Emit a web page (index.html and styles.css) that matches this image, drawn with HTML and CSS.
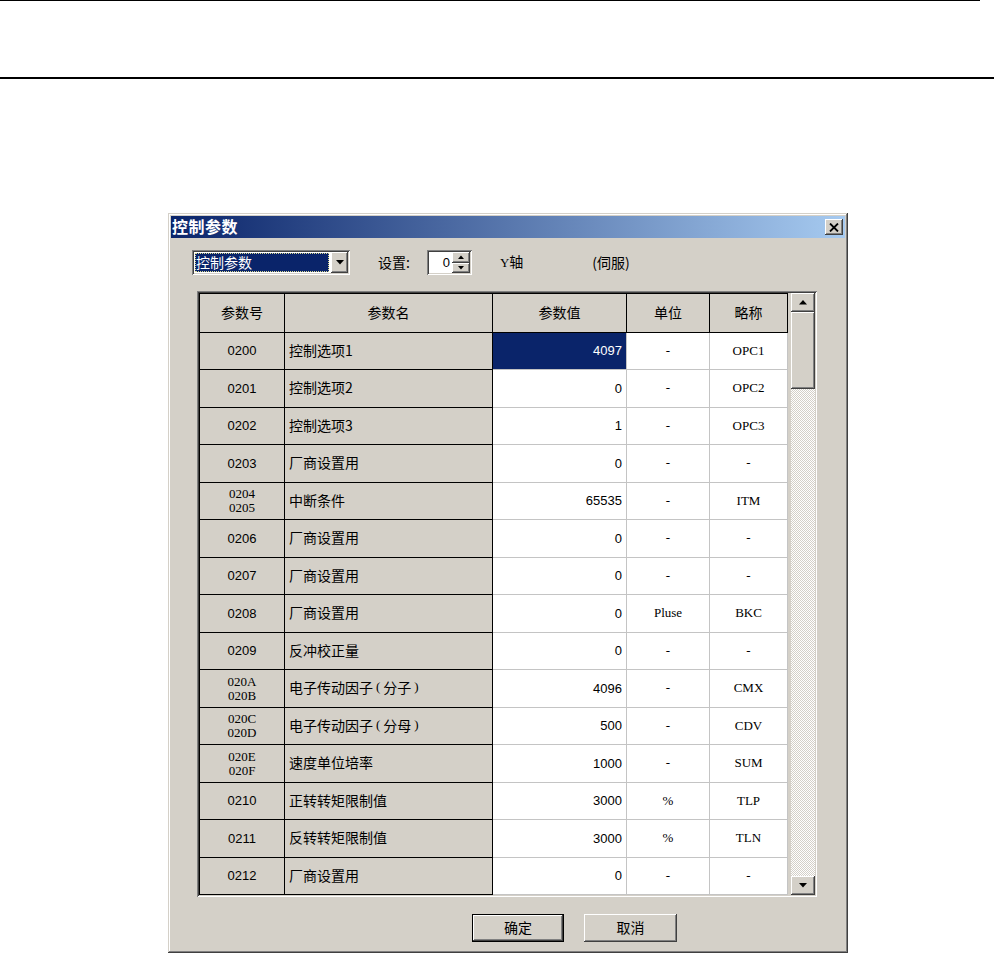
FILE: index.html
```html
<!DOCTYPE html>
<html lang="zh-CN">
<head>
<meta charset="utf-8">
<title>控制参数</title>
<link rel="stylesheet" href="styles.css">
</head>
<body>
<div class="rule-top"></div>
<div class="rule-bottom"></div>

<div class="dialog">
  <div class="titlebar">
    <span class="title">控制参数</span>
    <span class="close-btn raised">
      <svg width="10" height="9" viewBox="0 0 10 9"><path d="M1 0.5 L9 8.5 M9 0.5 L1 8.5" stroke="#000" stroke-width="1.8" fill="none"/></svg>
    </span>
  </div>

  <div class="toolbar">
    <div class="combo sunken">
      <div class="combo-value"><span>控制参数</span></div>
      <div class="combo-btn raised">
        <svg width="8" height="5" viewBox="0 0 8 5"><polygon points="0,0 8,0 4,4.5" fill="#000"/></svg>
      </div>
    </div>
    <span class="label set-label">设置:</span>
    <div class="spin sunken">
      <span class="spin-value">0</span>
      <div class="spin-btns">
        <div class="spin-btn raised"><svg width="6" height="4" viewBox="0 0 6 4"><polygon points="0,4 6,4 3,0.5" fill="#000"/></svg></div>
        <div class="spin-btn raised"><svg width="6" height="4" viewBox="0 0 6 4"><polygon points="0,0 6,0 3,3.5" fill="#000"/></svg></div>
      </div>
    </div>
    <span class="label axis"><span class="serif">Y</span>轴</span>
    <span class="label servo">(伺服)</span>
  </div>

  <div class="grid-frame">
    <div class="grid">
      <div class="c hd">参数号</div><div class="c hd">参数名</div><div class="c hd">参数值</div><div class="c hd">单位</div><div class="c hd hd-last">略称</div>

      <div class="c id">0200</div><div class="c name">控制选项1</div><div class="c val sel">4097</div><div class="c unit">-</div><div class="c abbr">OPC1</div>
      <div class="c id">0201</div><div class="c name">控制选项2</div><div class="c val">0</div><div class="c unit">-</div><div class="c abbr">OPC2</div>
      <div class="c id">0202</div><div class="c name">控制选项3</div><div class="c val">1</div><div class="c unit">-</div><div class="c abbr">OPC3</div>
      <div class="c id">0203</div><div class="c name">厂商设置用</div><div class="c val">0</div><div class="c unit">-</div><div class="c abbr">-</div>
      <div class="c id two"><span>0204</span><span>0205</span></div><div class="c name">中断条件</div><div class="c val">65535</div><div class="c unit">-</div><div class="c abbr">ITM</div>
      <div class="c id">0206</div><div class="c name">厂商设置用</div><div class="c val">0</div><div class="c unit">-</div><div class="c abbr">-</div>
      <div class="c id">0207</div><div class="c name">厂商设置用</div><div class="c val">0</div><div class="c unit">-</div><div class="c abbr">-</div>
      <div class="c id">0208</div><div class="c name">厂商设置用</div><div class="c val">0</div><div class="c unit">Pluse</div><div class="c abbr">BKC</div>
      <div class="c id">0209</div><div class="c name">反冲校正量</div><div class="c val">0</div><div class="c unit">-</div><div class="c abbr">-</div>
      <div class="c id two"><span>020A</span><span>020B</span></div><div class="c name">电子传动因子<span class="paren">(</span>分子<span class="paren">)</span></div><div class="c val">4096</div><div class="c unit">-</div><div class="c abbr">CMX</div>
      <div class="c id two"><span>020C</span><span>020D</span></div><div class="c name">电子传动因子<span class="paren">(</span>分母<span class="paren">)</span></div><div class="c val">500</div><div class="c unit">-</div><div class="c abbr">CDV</div>
      <div class="c id two"><span>020E</span><span>020F</span></div><div class="c name">速度单位培率</div><div class="c val">1000</div><div class="c unit">-</div><div class="c abbr">SUM</div>
      <div class="c id">0210</div><div class="c name">正转转矩限制值</div><div class="c val">3000</div><div class="c unit">%</div><div class="c abbr">TLP</div>
      <div class="c id">0211</div><div class="c name">反转转矩限制值</div><div class="c val">3000</div><div class="c unit">%</div><div class="c abbr">TLN</div>
      <div class="c id">0212</div><div class="c name">厂商设置用</div><div class="c val">0</div><div class="c unit">-</div><div class="c abbr">-</div>
    </div>
    <div class="vscroll">
      <div class="sb-btn raised"><svg width="8" height="5" viewBox="0 0 8 5"><polygon points="0,4.5 8,4.5 4,0" fill="#000"/></svg></div>
      <div class="sb-thumb raised"></div>
      <div class="sb-track"></div>
      <div class="sb-btn raised"><svg width="8" height="5" viewBox="0 0 8 5"><polygon points="0,0 8,0 4,4.5" fill="#000"/></svg></div>
    </div>
  </div>

  <div class="buttons">
    <div class="btn btn-default"><div class="btn-face raised">确定</div></div>
    <div class="btn"><div class="btn-face raised">取消</div></div>
  </div>
</div>
</body>
</html>
```

FILE: styles.css
```css
* { box-sizing: border-box; }

html, body {
  margin: 0;
  padding: 0;
  background: #ffffff;
}

body {
  width: 994px;
  height: 955px;
  overflow: hidden;
  font-family: "Noto Sans CJK SC", "Liberation Sans", sans-serif;
  font-size: 14px;
  color: #000;
}

.rule-top {
  width: 980px;
  height: 1px;
  background: #000;
}

.rule-bottom {
  margin-top: 76px;
  width: 994px;
  height: 2px;
  background: #000;
}

.raised {
  background: #d4d0c8;
  box-shadow: inset -1px -1px #404040, inset 1px 1px #ffffff,
              inset -2px -2px #808080, inset 2px 2px #d4d0c8;
}

.sunken {
  box-shadow: inset 1px 1px #808080, inset -1px -1px #ffffff,
              inset 2px 2px #404040, inset -2px -2px #d4d0c8;
}

.dialog {
  margin-top: 134px;
  margin-left: 168px;
  width: 680px;
  height: 740px;
  padding: 3px;
  background: #d4d0c8;
  box-shadow: inset -1px -1px #404040, inset 1px 1px #d4d0c8,
              inset -2px -2px #808080, inset 2px 2px #ffffff;
  display: flex;
  flex-direction: column;
}

.titlebar {
  height: 22px;
  background: linear-gradient(to right, #0a246a, #a6caf0);
  display: flex;
  align-items: center;
  justify-content: space-between;
  padding: 0 2px 0 1px;
}

.title {
  color: #fff;
  font-weight: bold;
  font-size: 16px;
  line-height: 18px;
  padding-bottom: 3px;
  letter-spacing: 0.5px;
}

.close-btn {
  width: 18px;
  height: 16px;
  display: flex;
  align-items: center;
  justify-content: center;
}

.toolbar {
  margin-top: 12px;
  height: 25px;
  padding-left: 21px;
  display: flex;
  align-items: center;
}

.combo {
  width: 158px;
  height: 25px;
  background: #fff;
  padding: 2px;
  display: flex;
}

.combo-value {
  flex: 1;
  margin: 1px 2px 1px 1px;
  background: #0a246a;
  color: #fff;
  outline: 1px dotted #d8d890;
  outline-offset: -1px;
  display: flex;
  align-items: center;
  padding-left: 1px;
  padding-bottom: 2px;
  font-size: 14px;
  line-height: 16px;
}

.combo-btn {
  width: 17px;
  display: flex;
  align-items: center;
  justify-content: center;
}

.label {
  font-size: 14px;
  line-height: 16px;
  padding-bottom: 2px;
}

.set-label { margin-left: 28px; }

.serif {
  font-family: "Liberation Serif", serif;
  font-size: 13px;
}

.spin {
  margin-left: 17px;
  width: 45px;
  height: 25px;
  background: #fff;
  padding: 2px;
  display: flex;
}

.spin-value {
  flex: 1;
  text-align: right;
  padding-right: 2px;
  font-family: "Liberation Sans", sans-serif;
  font-size: 13px;
  line-height: 21px;
}

.spin-btns {
  width: 18px;
  display: flex;
  flex-direction: column;
}

.spin-btn {
  flex: 1;
  display: flex;
  align-items: center;
  justify-content: center;
}

.axis { margin-left: 28px; }
.servo { margin-left: 69px; }

.grid-frame {
  margin-top: 16px;
  margin-left: 26px;
  width: 620px;
  height: 606px;
  padding: 2px;
  background: #d4d0c8;
  box-shadow: inset 1px 1px #808080, inset -1px -1px #ffffff,
              inset 2px 2px #404040, inset -2px -2px #d4d0c8;
  display: flex;
}

.grid {
  width: 589px;
  height: 602px;
  border-top: 1px solid #000;
  border-left: 1px solid #000;
  display: grid;
  grid-template-columns: 85px 208px 134px 83px 78px;
  grid-template-rows: 39px repeat(7, 37px 38px) 37px;
}

.c {
  display: flex;
  align-items: center;
  border-right: 1px solid #c4c4c4;
  border-bottom: 1px solid #c4c4c4;
  background: #fff;
  white-space: nowrap;
  overflow: hidden;
}

.hd {
  background: #d4d0c8;
  justify-content: center;
  border-right: 1px solid #000;
  border-bottom: 1px solid #000;
  font-size: 14px;
  line-height: 16px;
  padding-bottom: 3px;
}

.id {
  background: #d4d0c8;
  justify-content: center;
  border-right: 1px solid #000;
  border-bottom: 1px solid #000;
  font-family: "Liberation Sans", sans-serif;
  font-size: 13px;
  padding-bottom: 1px;
}

.id.two {
  flex-direction: column;
  font-family: "Liberation Serif", serif;
  font-size: 13px;
  line-height: 14px;
  padding-bottom: 0;
}

.name {
  background: #d4d0c8;
  border-right: 1px solid #000;
  border-bottom: 1px solid #000;
  padding-left: 4px;
  font-size: 14px;
  line-height: 16px;
  padding-bottom: 3px;
}

.paren {
  font-family: "Liberation Serif", serif;
  font-size: 13px;
  padding: 0 3px;
}

.val {
  justify-content: flex-end;
  padding-right: 4px;
  padding-bottom: 1px;
  font-family: "Liberation Sans", sans-serif;
  font-size: 13px;
}

.val.sel {
  background: #0a246a;
  color: #fff;
}

.unit, .abbr {
  justify-content: center;
  font-family: "Liberation Serif", serif;
  font-size: 13px;
  padding-bottom: 1px;
}

.vscroll {
  margin-left: 3px;
  width: 24px;
  height: 602px;
  display: flex;
  flex-direction: column;
}

.sb-btn {
  height: 19px;
  display: flex;
  align-items: center;
  justify-content: center;
}

.sb-thumb {
  height: 77px;
}

.sb-track {
  flex: 1;
  background: repeating-conic-gradient(#ffffff 0% 25%, #d4d0c8 0% 50%) 0 0 / 2px 2px;
}

.buttons {
  margin-top: 17px;
  padding-left: 301px;
  display: flex;
  gap: 20px;
}

.btn {
  width: 93px;
  height: 28px;
  display: flex;
}

.btn-default {
  width: 92px;
  border: 1px solid #000;
}

.btn-face {
  flex: 1;
  display: flex;
  align-items: center;
  justify-content: center;
  font-size: 14px;
  line-height: 16px;
  padding-bottom: 2px;
}
```
